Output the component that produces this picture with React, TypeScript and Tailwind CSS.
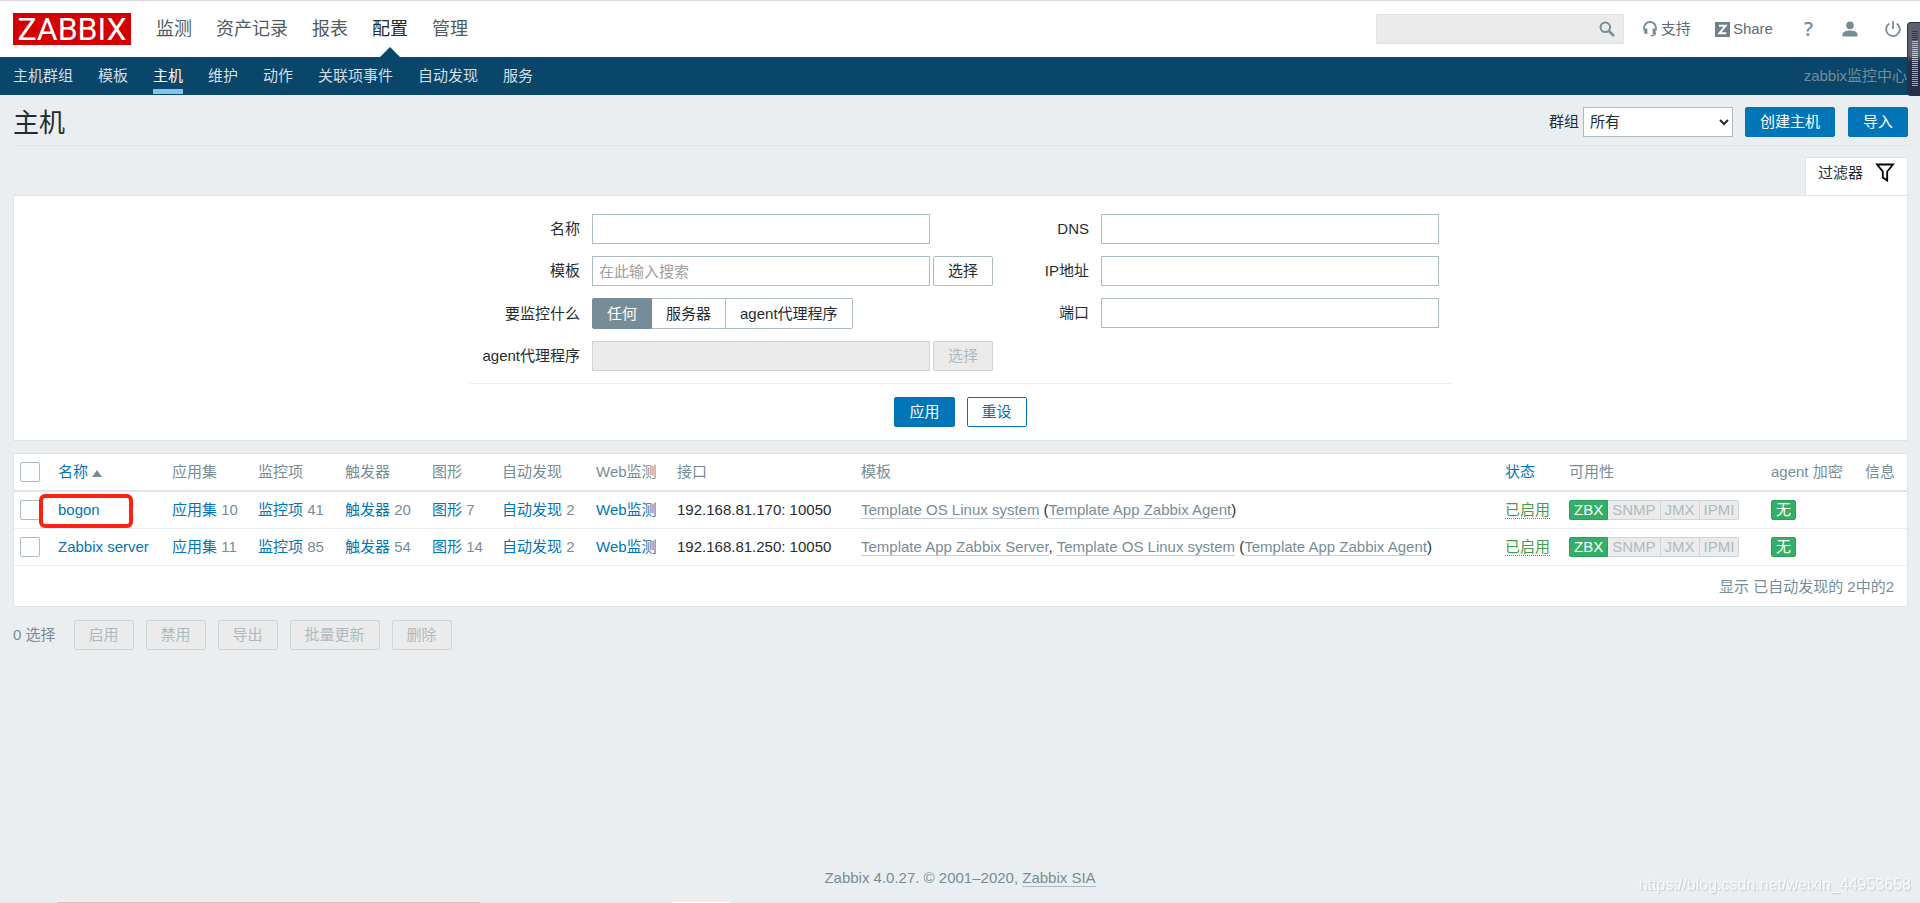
import { useState } from "react";
import type { ButtonHTMLAttributes, InputHTMLAttributes, ReactNode } from "react";
import clsx from "clsx";

const mainMenu = ["监测", "资产记录", "报表", "配置", "管理"];
const subMenu = ["主机群组", "模板", "主机", "维护", "动作", "关联项事件", "自动发现", "服务"];
const monitoredBy = ["任何", "服务器", "agent代理程序"];
const bulkActions = ["启用", "禁用", "导出", "批量更新", "删除"];

const hosts = [
    {
        name: "bogon",
        applications: 10,
        items: 41,
        triggers: 20,
        graphs: 7,
        discovery: 2,
        iface: "192.168.81.170: 10050",
        templates: [{ name: "Template OS Linux system", linked: "Template App Zabbix Agent" }],
    },
    {
        name: "Zabbix server",
        applications: 11,
        items: 85,
        triggers: 54,
        graphs: 14,
        discovery: 2,
        iface: "192.168.81.250: 10050",
        templates: [
            { name: "Template App Zabbix Server", linked: "" },
            { name: "Template OS Linux system", linked: "Template App Zabbix Agent" },
        ],
    },
];

// Segment colours of the level meter, top to bottom
const meterBars = [
    "bg-[#363a44]", "bg-[#363a44]", "bg-[#363a44]", "bg-[#363a44]", "bg-[#363a44]",
    "bg-[#f0a878]", "bg-[#f0a868]", "bg-[#f0b060]", "bg-[#ecb85c]", "bg-[#ecc058]",
    "bg-[#e8cc54]", "bg-[#e8d850]", "bg-[#e4e050]", "bg-[#d4e054]", "bg-[#c4dc58]",
    "bg-[#b0d45c]", "bg-[#a0d064]", "bg-[#90d06c]", "bg-[#80d078]", "bg-[#70d084]",
    "bg-[#64d090]", "bg-[#58d09c]", "bg-[#50d0a8]", "bg-[#48d4b0]", "bg-[#44d4b8]",
    "bg-[#40d4c0]", "bg-[#3cd4c4]", "bg-[#38d4c8]",
];

function SearchIcon() {
    return (
        <svg className="w-4 h-4" viewBox="0 0 16 16" fill="none" stroke="#768d99" aria-hidden="true">
            <circle cx="6.3" cy="6.3" r="4.8" strokeWidth="2" />
            <path d="M9.8 9.8L15 15" strokeWidth="2.6" />
        </svg>
    );
}

function SupportIcon() {
    return (
        <svg className="w-4 h-4" viewBox="0 0 16 16" fill="none" stroke="#768d99" aria-hidden="true">
            <path d="M2 9.5V7a6 6 0 0 1 12 0v2.5" strokeWidth="1.8" />
            <path d="M3 7.5v5M4.6 7.5v5.5M12.8 7.5v5M11.4 7.5v5.5" strokeWidth="1.6" />
            <path d="M13.4 11.5c0 2.2-1.6 3.3-4.4 3.3" strokeWidth="1.6" />
        </svg>
    );
}

function ShareIcon() {
    return (
        <svg className="w-[15px] h-[15px]" viewBox="0 0 15 15" aria-hidden="true">
            <rect width="15" height="15" fill="#6b818d" />
            <path d="M4 3.8h6.6L4.4 11.2h6.8" fill="none" stroke="#fff" strokeWidth="2" />
        </svg>
    );
}

function UserIcon() {
    return (
        <svg className="w-4 h-4" viewBox="0 0 16 16" fill="#768d99" aria-hidden="true">
            <circle cx="8" cy="4.4" r="3.8" />
            <path d="M0.5 15.5v-2C0.5 11 4.5 9.6 8 9.6s7.5 1.4 7.5 3.9v2z" />
        </svg>
    );
}

function PowerIcon() {
    return (
        <svg className="w-4 h-4" viewBox="0 0 16 16" fill="none" stroke="#768d99" strokeWidth="1.8" aria-hidden="true">
            <path d="M8 0v8" />
            <path d="M4.3 2.6a6.8 6.8 0 1 0 7.4 0" />
        </svg>
    );
}

function FilterIcon() {
    return (
        <svg className="w-5 h-5" viewBox="0 0 20 20" fill="none" stroke="#000" strokeWidth="1.8" aria-hidden="true">
            <path d="M2 1.500h16l-5.800 7v9l-4.400-3v-6z" />
        </svg>
    );
}

type ButtonProps = ButtonHTMLAttributes<HTMLButtonElement> & { variant?: "primary" | "outline" | "plain" };

function Button({ variant = "plain", className, ...props }: ButtonProps) {
    return (
        <button
            type="button"
            className={clsx(
                "h-[30px] px-3.5 border rounded-xs whitespace-nowrap",
                variant === "primary" && "bg-[#0275b8] border-[#0275b8] text-white",
                variant === "outline" && "bg-white border-[#0275b8] text-[#0275b8]",
                variant === "plain" && "bg-white border-[#acbbc2] text-[#1f2c33]",
                "disabled:bg-[#ebebeb] disabled:border-[#ccd5d9] disabled:text-[#acbbc2]",
                className
            )}
            {...props}
        />
    );
}

function TextInput(props: InputHTMLAttributes<HTMLInputElement>) {
    return (
        <input
            type="text"
            className="w-[338px] h-[30px] px-1.5 border border-[#acbbc2] bg-white placeholder:text-[#a0a0a0] disabled:bg-[#ebebeb] disabled:border-[#ccd5d9]"
            {...props}
        />
    );
}

function Checkbox({ label }: { label: string }) {
    return (
        <input
            type="checkbox"
            aria-label={label}
            className="block w-5 h-5 appearance-none border border-[#acbbc2] rounded-xs bg-white checked:bg-[#0275b8]"
        />
    );
}

type FormRowProps = { label: string; htmlFor?: string; labelWidth?: string; children: ReactNode };

function FormRow({ label, htmlFor, labelWidth = "w-[98px]", children }: FormRowProps) {
    return (
        <div className="flex items-center gap-3">
            <label htmlFor={htmlFor} className={clsx("text-right whitespace-nowrap", labelWidth)}>{label}</label>
            <div className="flex items-center gap-[3px]">{children}</div>
        </div>
    );
}

function CountLink({ text, count }: { text: string; count: number }) {
    return (
        <td className="px-1.5 whitespace-nowrap text-[#768d99]">
            <a href="#" className="text-[#0275b8]">{text}</a> {count}
        </td>
    );
}

function TemplateLink({ children }: { children: ReactNode }) {
    return <a href="#" className="text-[#768d99] border-b border-[#c3ced4]">{children}</a>;
}

function Header() {
    return (
        <header>
            <div className="h-[57px] pl-[13px] pr-[19px] flex items-center justify-between bg-white border-t border-[#d8dadf]">
                <div className="flex items-center gap-[25px] h-full">
                    <a href="#" className="w-[118px] h-8 flex items-center justify-center bg-[#d40000] text-white font-['Roboto',sans-serif] text-[32px] leading-8">
                        ZABBIX
                    </a>
                    <nav className="flex gap-6 h-full text-lg text-[#4f5b63]">
                        {mainMenu.map((item) => (
                            <a key={item} href="#" className={clsx("relative flex items-center", item === "配置" && "text-[#1f2c33]")}>
                                {item}
                                {item === "配置" && (
                                    <span className="absolute bottom-0 left-1/2 -translate-x-1/2 border-x-10 border-b-10 border-x-transparent border-b-[#0a466a]" />
                                )}
                            </a>
                        ))}
                    </nav>
                </div>
                <div className="flex items-center text-[#5e6d76]">
                    <form className="flex items-center w-[248px] h-[30px] mr-[18px] pr-2 bg-[#ebebeb] border border-[#dfe4e7]">
                        <input type="text" aria-label="搜索" className="grow h-full px-1.5 outline-none" />
                        <button type="button" aria-label="搜索"><SearchIcon /></button>
                    </form>
                    <a href="#" className="flex items-center gap-[3px] mr-6"><SupportIcon />支持</a>
                    <a href="#" className="flex items-center gap-[3px] mr-[31px]"><ShareIcon />Share</a>
                    <a href="#" aria-label="帮助" className="mr-[29px] text-xl font-semibold text-[#768d99] font-['Open_Sans',sans-serif]">?</a>
                    <a href="#" aria-label="用户" className="mr-[27px]"><UserIcon /></a>
                    <a href="#" aria-label="退出"><PowerIcon /></a>
                </div>
            </div>
            <div className="h-[38px] px-[13px] flex items-center justify-between bg-[#0a466a]">
                <nav className="flex gap-[25px] h-full text-[#d3dfe6]">
                    {subMenu.map((item) => (
                        <a
                            key={item}
                            href="#"
                            className={clsx("h-[37px] flex items-center border-y-5 border-transparent", item === "主机" && "text-white border-b-[#80c4f2]")}
                        >
                            {item}
                        </a>
                    ))}
                </nav>
                <span className="text-[#768d99]">zabbix监控中心</span>
            </div>
        </header>
    );
}

function Filter() {
    const [source, setSource] = useState("任何");

    return (
        <section>
            <div className="flex justify-end">
                <button type="button" className="flex items-center gap-3 h-[38px] px-3 pb-2 bg-white border border-b-0 border-[#dfe4e7] rounded-t-xs">
                    过滤器
                    <FilterIcon />
                </button>
            </div>
            <form className="bg-white border border-[#dfe4e7] pt-[18px] pb-[13px]">
                <div className="w-[981px] mx-auto">
                    <div className="flex justify-between px-3 pb-3 border-b border-[#ebeef0]">
                        <div className="flex flex-col gap-3">
                            <FormRow label="名称" htmlFor="name"><TextInput id="name" /></FormRow>
                            <FormRow label="模板" htmlFor="template">
                                <TextInput id="template" placeholder="在此输入搜索" />
                                <Button>选择</Button>
                            </FormRow>
                            <FormRow label="要监控什么">
                                <div role="radiogroup" aria-label="要监控什么" className="flex h-[31px]">
                                    {monitoredBy.map((option) => (
                                        <label
                                            key={option}
                                            className={clsx(
                                                "relative flex items-center px-3.5 border border-l-0 first:border-l first:rounded-l-xs last:rounded-r-xs",
                                                source === option ? "bg-[#768d99] border-[#768d99] text-white" : "bg-white border-[#acbbc2]"
                                            )}
                                        >
                                            <input
                                                type="radio"
                                                name="monitored_by"
                                                className="sr-only"
                                                checked={source === option}
                                                onChange={() => setSource(option)}
                                            />
                                            {option}
                                        </label>
                                    ))}
                                </div>
                            </FormRow>
                            <FormRow label="agent代理程序" htmlFor="proxy">
                                <TextInput id="proxy" disabled />
                                <Button disabled>选择</Button>
                            </FormRow>
                        </div>
                        <div className="flex flex-col gap-3">
                            <FormRow label="DNS" htmlFor="dns" labelWidth="w-20"><TextInput id="dns" /></FormRow>
                            <FormRow label="IP地址" htmlFor="ip" labelWidth="w-20"><TextInput id="ip" /></FormRow>
                            <FormRow label="端口" htmlFor="port" labelWidth="w-20"><TextInput id="port" /></FormRow>
                        </div>
                    </div>
                    <div className="flex justify-center gap-3 pt-[13px]">
                        <Button variant="primary">应用</Button>
                        <Button variant="outline">重设</Button>
                    </div>
                </div>
            </form>
        </section>
    );
}

function Availability() {
    return (
        <div className="inline-flex h-5 leading-[18px] text-[#acbbc2] align-middle">
            <span className="px-1 bg-[#34af67] border border-[#2f9f5e] rounded-l-xs text-white">ZBX</span>
            {["SNMP", "JMX", "IPMI"].map((type) => (
                <span key={type} className="px-1 bg-[#ebebeb] border border-l-0 border-[#ccd5d9] last:rounded-r-xs">{type}</span>
            ))}
        </div>
    );
}

function HostTable() {
    return (
        <div className="bg-white border border-[#dfe4e7]">
            <table className="w-full table-fixed text-left">
                <thead>
                    <tr className="h-[37px] border-b-2 border-[#dfe4e7] text-[#768d99] whitespace-nowrap *:font-normal *:px-1.5">
                        <th className="w-[38px]"><Checkbox label="全选" /></th>
                        <th className="w-[114px]">
                            <a href="#" className="text-[#0275b8]">
                                名称
                                <span className="inline-block ml-1 border-x-5 border-b-[7px] border-x-transparent border-b-[#768d99]" />
                            </a>
                        </th>
                        <th className="w-[86px]">应用集</th>
                        <th className="w-[87px]">监控项</th>
                        <th className="w-[87px]">触发器</th>
                        <th className="w-[70px]">图形</th>
                        <th className="w-[94px]">自动发现</th>
                        <th className="w-[81px]">Web监测</th>
                        <th className="w-[184px]">接口</th>
                        <th>模板</th>
                        <th className="w-16"><a href="#" className="text-[#0275b8]">状态</a></th>
                        <th className="w-[202px]">可用性</th>
                        <th className="w-[94px]">agent 加密</th>
                        <th className="w-12">信息</th>
                    </tr>
                </thead>
                <tbody>
                    {hosts.map((host) => (
                        <tr key={host.name} className="h-[37px] border-b border-[#ebeef0]">
                            <td className="px-1.5"><Checkbox label={host.name} /></td>
                            <td className="px-1.5 whitespace-nowrap">
                                <div className="relative">
                                    <a href="#" className="text-[#0275b8]">{host.name}</a>
                                    {host.name === "bogon" && (
                                        <span className="absolute -top-1.5 -bottom-2 -left-[19px] w-[94px] border-4 border-[#ff2212] rounded-md pointer-events-none" />
                                    )}
                                </div>
                            </td>
                            <CountLink text="应用集" count={host.applications} />
                            <CountLink text="监控项" count={host.items} />
                            <CountLink text="触发器" count={host.triggers} />
                            <CountLink text="图形" count={host.graphs} />
                            <CountLink text="自动发现" count={host.discovery} />
                            <td className="px-1.5"><a href="#" className="text-[#0275b8]">Web监测</a></td>
                            <td className="px-1.5 whitespace-nowrap">{host.iface}</td>
                            <td className="px-1.5">
                                {host.templates.map((template, i) => (
                                    <span key={template.name}>
                                        {i > 0 && ", "}
                                        <TemplateLink>{template.name}</TemplateLink>
                                        {template.linked && <> (<TemplateLink>{template.linked}</TemplateLink>)</>}
                                    </span>
                                ))}
                            </td>
                            <td className="px-1.5 whitespace-nowrap">
                                <a href="#" className="text-[#429e47] border-b border-dotted border-[#429e47]">已启用</a>
                            </td>
                            <td className="px-1.5"><Availability /></td>
                            <td className="px-1.5">
                                <span className="inline-block h-5 px-1 leading-[18px] align-middle bg-[#34af67] border border-[#2f9f5e] rounded-xs text-white">无</span>
                            </td>
                            <td />
                        </tr>
                    ))}
                </tbody>
            </table>
            <div className="h-10 pt-0.5 pr-[13px] flex items-center justify-end text-[#768d99]">显示 已自动发现的 2中的2</div>
        </div>
    );
}

function LevelMeter() {
    return (
        <div className="fixed right-0 top-[22px] w-[13px] h-[74px] pl-1 pt-2 flex flex-col gap-px rounded-l-sm border border-r-0 border-[#2c3340] bg-linear-to-b from-[#5d6070] from-45% to-[#252f45] to-55%">
            {meterBars.map((color, i) => (
                <span key={i} className={clsx("w-1.5 h-px", color)} />
            ))}
        </div>
    );
}

export default function App() {
    return (
        <div className="min-h-screen flex flex-col bg-[#ebeef0] text-[#1f2c33] text-[15px] leading-5 font-['Liberation_Sans','Noto_Sans_CJK_SC',sans-serif]">
            <Header />
            <main className="grow pl-[13px] pr-3">
                <div className="flex items-center justify-between h-[51px] pt-[3px] mb-[11px] border-b border-[#dfe4e7]">
                    <h1 className="pt-[3px] text-[26px] leading-8">主机</h1>
                    <div className="flex items-center">
                        <label htmlFor="group" className="mr-1">群组</label>
                        <select id="group" className="w-[150px] h-[30px] mr-3 px-0.5 bg-white border border-[#acbbc2]">
                            <option>所有</option>
                        </select>
                        <Button variant="primary" className="mr-[13px]">创建主机</Button>
                        <Button variant="primary">导入</Button>
                    </div>
                </div>
                <Filter />
                <div className="mt-3">
                    <HostTable />
                </div>
                <div className="flex items-center gap-3 mt-[13px]">
                    <span className="mr-1.5 text-[#768d99]">0 选择</span>
                    {bulkActions.map((action) => (
                        <Button key={action} disabled>{action}</Button>
                    ))}
                </div>
            </main>
            <footer className="pb-[15px] text-center text-[#768d99]">
                Zabbix 4.0.27. © 2001–2020, <a href="#" className="border-b border-[#acbbc2]">Zabbix SIA</a>
            </footer>
            <LevelMeter />
            <span className="fixed right-[9px] bottom-2 text-base leading-5 text-[#f8fafa] [text-shadow:1px_1px_1px_#c4c9cc]">
                https://blog.csdn.net/weixin_44953658
            </span>
            <div className="fixed inset-x-0 bottom-0 flex h-px bg-[#dfeae4]">
                <span className="w-[22%] ml-[3%] bg-[#c8c8c8]" />
                <span className="w-[3%] ml-[10%] bg-white" />
            </div>
        </div>
    );
}
